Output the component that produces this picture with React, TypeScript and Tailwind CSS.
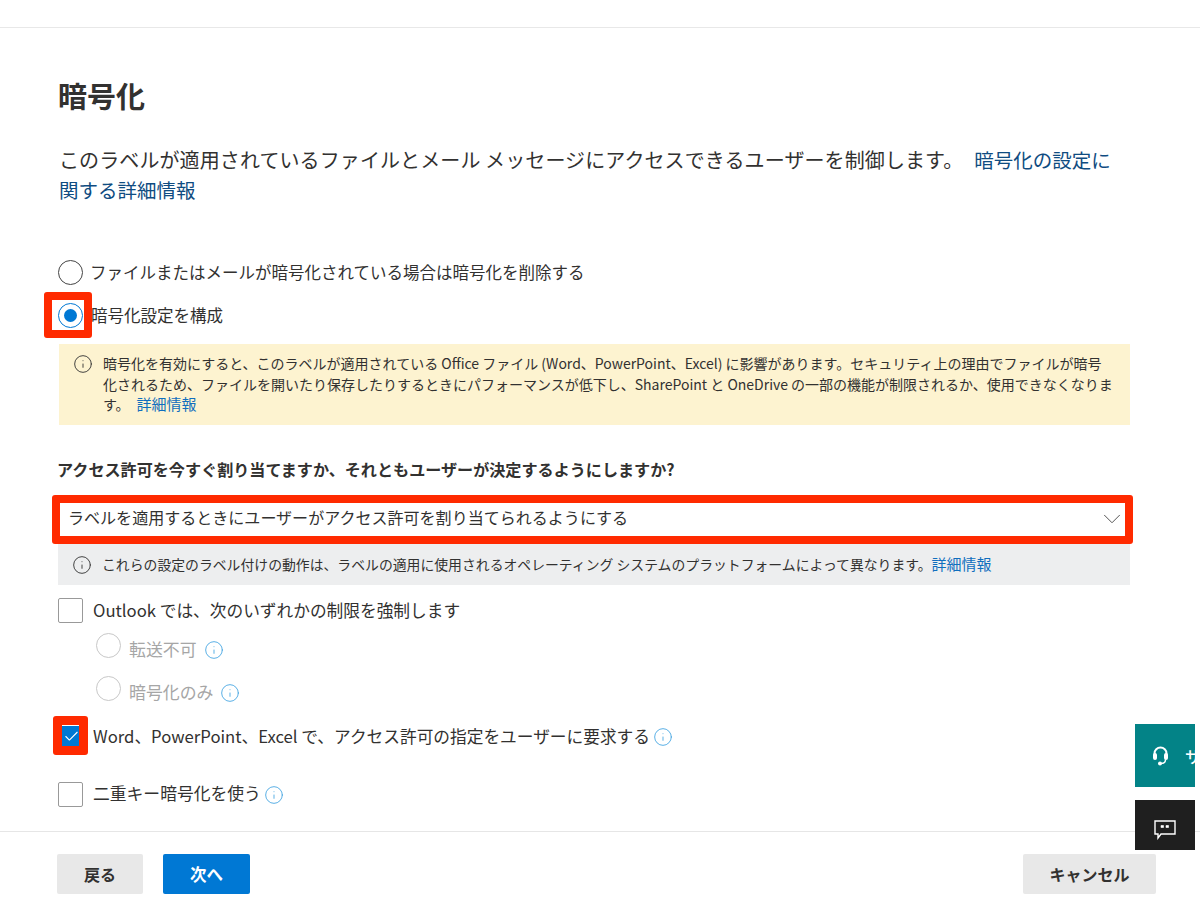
import React from 'react';
import { Check, ChevronDown, Info } from 'lucide-react';

const InfoMark = () => <Info className="w-[20px] h-[20px] text-[#3aa0e0] shrink-0" strokeWidth={1} />;

const App: React.FC = () => {
  return (
    <div className="relative w-[1200px] h-[898px] overflow-hidden bg-white flex flex-col text-[#323130] font-['Noto_Sans_CJK_JP','Noto_Sans',sans-serif]">
      <div className="h-[28px] shrink-0 border-b border-[#e8e8e8]" />

      <main className="flex-1 min-h-0 pl-[59px] pr-[70px]">
        <h1 className="mt-[45px] -ml-[1px] text-[29px] leading-[44px] font-semibold">暗号化</h1>

        <p className="mt-[28px] w-[1060px] text-[20px] leading-[30px] tracking-[0.1px]">
          このラベルが適用されているファイルとメール メッセージにアクセスできるユーザーを制御します。
          <a className="ml-[11px] text-[19.5px] tracking-normal text-[#0f4c81]">暗号化の設定に関する詳細情報</a>
        </p>

        <div className="mt-[53px] -ml-[1px] flex items-center h-[28px]">
          <span className="w-[25px] h-[25px] rounded-full border border-[#444] shrink-0" />
          <span className="ml-[7px] text-[16.5px]">ファイルまたはメールが暗号化されている場合は暗号化を削除する</span>
        </div>

        <div className="mt-[15px] -ml-[1px] flex items-center h-[28px]">
          <div className="relative w-[25px] h-[25px] rounded-full border border-[#0078d4] shrink-0 flex items-center justify-center">
            <span className="w-[13px] h-[13px] rounded-full bg-[#0078d4]" />
            <span className="absolute left-[-15px] top-[-12px] w-[48px] h-[46px] border-[8px] border-[#ff2a00] rounded-[3px]" />
          </div>
          <span className="ml-[8px] text-[16.5px]">暗号化設定を構成</span>
        </div>

        <div className="mt-[15px] h-[81px] bg-[#fdf3d0] flex pl-[15px] pr-[16px] pt-[9px]">
          <Info className="w-[20px] h-[20px] mt-[1px] -ml-[1px] shrink-0 text-[#333]" strokeWidth={1.1} />
          <p className="ml-[10px] text-[14px] leading-[20.5px]">
            暗号化を有効にすると、このラベルが適用されている Office ファイル (Word、PowerPoint、Excel) に影響があります。セキュリティ上の理由でファイルが暗号化されるため、ファイルを開いたり保存したりするときにパフォーマンスが低下し、SharePoint と OneDrive の一部の機能が制限されるか、使用できなくなります。
            <a className="ml-[7px] text-[15px] text-[#106ebe]">詳細情報</a>
          </p>
        </div>

        <h2 className="mt-[31px] -ml-[2px] text-[16.1px] leading-[26px] font-bold">
          アクセス許可を今すぐ割り当てますか、それともユーザーが決定するようにしますか?
        </h2>

        <div className="mt-[13px] -ml-[7px] w-[1081px] h-[49px] border-[8px] border-[#ff2a00] rounded-[3px] flex items-center justify-between pl-[8px] pr-0">
          <span className="text-[16.05px] pb-[4px]">ラベルを適用するときにユーザーがアクセス許可を割り当てられるようにする</span>
          <ChevronDown className="w-[30px] h-[30px] text-[#555] -mr-[2px] mb-[2px] shrink-0" strokeWidth={0.8} />
        </div>

        <div className="-ml-[1px] h-[41px] bg-[#edeeef] flex items-center pl-[15px]">
          <Info className="w-[20px] h-[20px] -ml-[1px] shrink-0 text-[#333]" strokeWidth={1.1} />
          <span className="ml-[10px] text-[13.85px]">
            これらの設定のラベル付けの動作は、ラベルの適用に使用されるオペレーティング システムのプラットフォームによって異なります。<a className="text-[15px] text-[#106ebe]">詳細情報</a>
          </span>
        </div>

        <div className="mt-[12px] -ml-[1px] flex items-center h-[26px]">
          <span className="w-[25px] h-[25px] rounded-[2px] border border-[#999] shrink-0" />
          <span className="ml-[10px] mt-[2px] text-[16.7px]">Outlook では、次のいずれかの制限を強制します</span>
        </div>

        <div className="mt-[11px] ml-[37px] flex items-center h-[28px]">
          <span className="w-[25px] h-[25px] mb-[6px] rounded-full border border-[#c8c8c8] shrink-0" />
          <span className="ml-[8px] mt-[2px] text-[16.9px] text-[#a6a6a6]">転送不可</span>
          <span className="ml-[7px] mt-[4px]"><InfoMark /></span>
        </div>

        <div className="mt-[15px] ml-[37px] flex items-center h-[28px]">
          <span className="w-[25px] h-[25px] mb-[6px] rounded-full border border-[#c8c8c8] shrink-0" />
          <span className="ml-[8px] mt-[2px] text-[16.9px] text-[#a6a6a6]">暗号化のみ</span>
          <span className="ml-[7px] mt-[4px]"><InfoMark /></span>
        </div>

        <div className="mt-[17px] flex items-center h-[28px]">
          <div className="relative w-[18px] h-[20px] ml-[3px] bg-[#0078d4] shrink-0 flex items-center justify-center">
            <Check className="w-[17px] h-[17px] text-white" strokeWidth={1.5} />
            <span className="absolute left-[-9px] top-[-10px] w-[35px] h-[39px] border-[9px] border-[#ff2a00] rounded-[3px]" />
          </div>
          <span className="ml-[13px] mt-[2px] text-[16.7px]">Word、PowerPoint、Excel で、アクセス許可の指定をユーザーに要求する</span>
          <span className="ml-[3px] mt-[2px]"><InfoMark /></span>
        </div>

        <div className="mt-[31px] -ml-[1px] flex items-center h-[26px]">
          <span className="w-[25px] h-[25px] rounded-[2px] border border-[#999] shrink-0" />
          <span className="ml-[10px] text-[16.8px]">二重キー暗号化を使う</span>
          <span className="ml-[3px] mt-[2px]"><InfoMark /></span>
        </div>
      </main>

      <footer className="h-[67px] shrink-0 border-t border-[#e6e6e6] flex items-start pt-[22px] pl-[57px] pr-[44px]">
        <button className="w-[86px] h-[40px] bg-[#e8e8e8] rounded-[2px] text-[16px] font-bold">戻る</button>
        <button className="ml-[20px] w-[87px] h-[40px] bg-[#0078d4] rounded-[2px] text-[16.5px] font-bold text-white">次へ</button>
        <button className="ml-auto w-[133px] h-[40px] bg-[#e8e8e8] rounded-[2px] text-[16px] font-bold">キャンセル</button>
      </footer>

      <div className="absolute left-[1135px] top-[724px] w-[60px] h-[63px] bg-[#038387] overflow-hidden flex items-center pl-[17px] text-white">
        <svg width="17" height="20" viewBox="0 0 17 20" fill="none" className="shrink-0">
          <path d="M2.5 9V7.5a6 6 0 0 1 12 0V9" stroke="white" strokeWidth="2" />
          <rect x="1" y="7" width="4" height="7" rx="2" fill="white" />
          <rect x="12" y="7" width="4" height="7" rx="2" fill="white" />
          <path d="M13.5 13.5c0 2.5-1.5 4-4.5 4" stroke="white" strokeWidth="1.4" />
          <circle cx="8" cy="17.5" r="2" fill="white" />
        </svg>
        <span className="ml-[16px] text-[16px] font-medium whitespace-nowrap">サポート</span>
      </div>

      <div className="absolute left-[1135px] top-[800px] w-[60px] h-[50px] bg-[#1f1f1f] flex items-end justify-center pb-[10px]">
        <svg width="22" height="20" viewBox="0 0 22 20" fill="none" stroke="white" strokeWidth="1.4">
          <path d="M1 1h20v13H7l-3 4v-4H1z" />
          <path d="M7 5.5h2.5v2H7zM12 5.5h2.5v2H12z" fill="white" strokeWidth="0.6" />
        </svg>
      </div>
    </div>
  );
};

export default App;
